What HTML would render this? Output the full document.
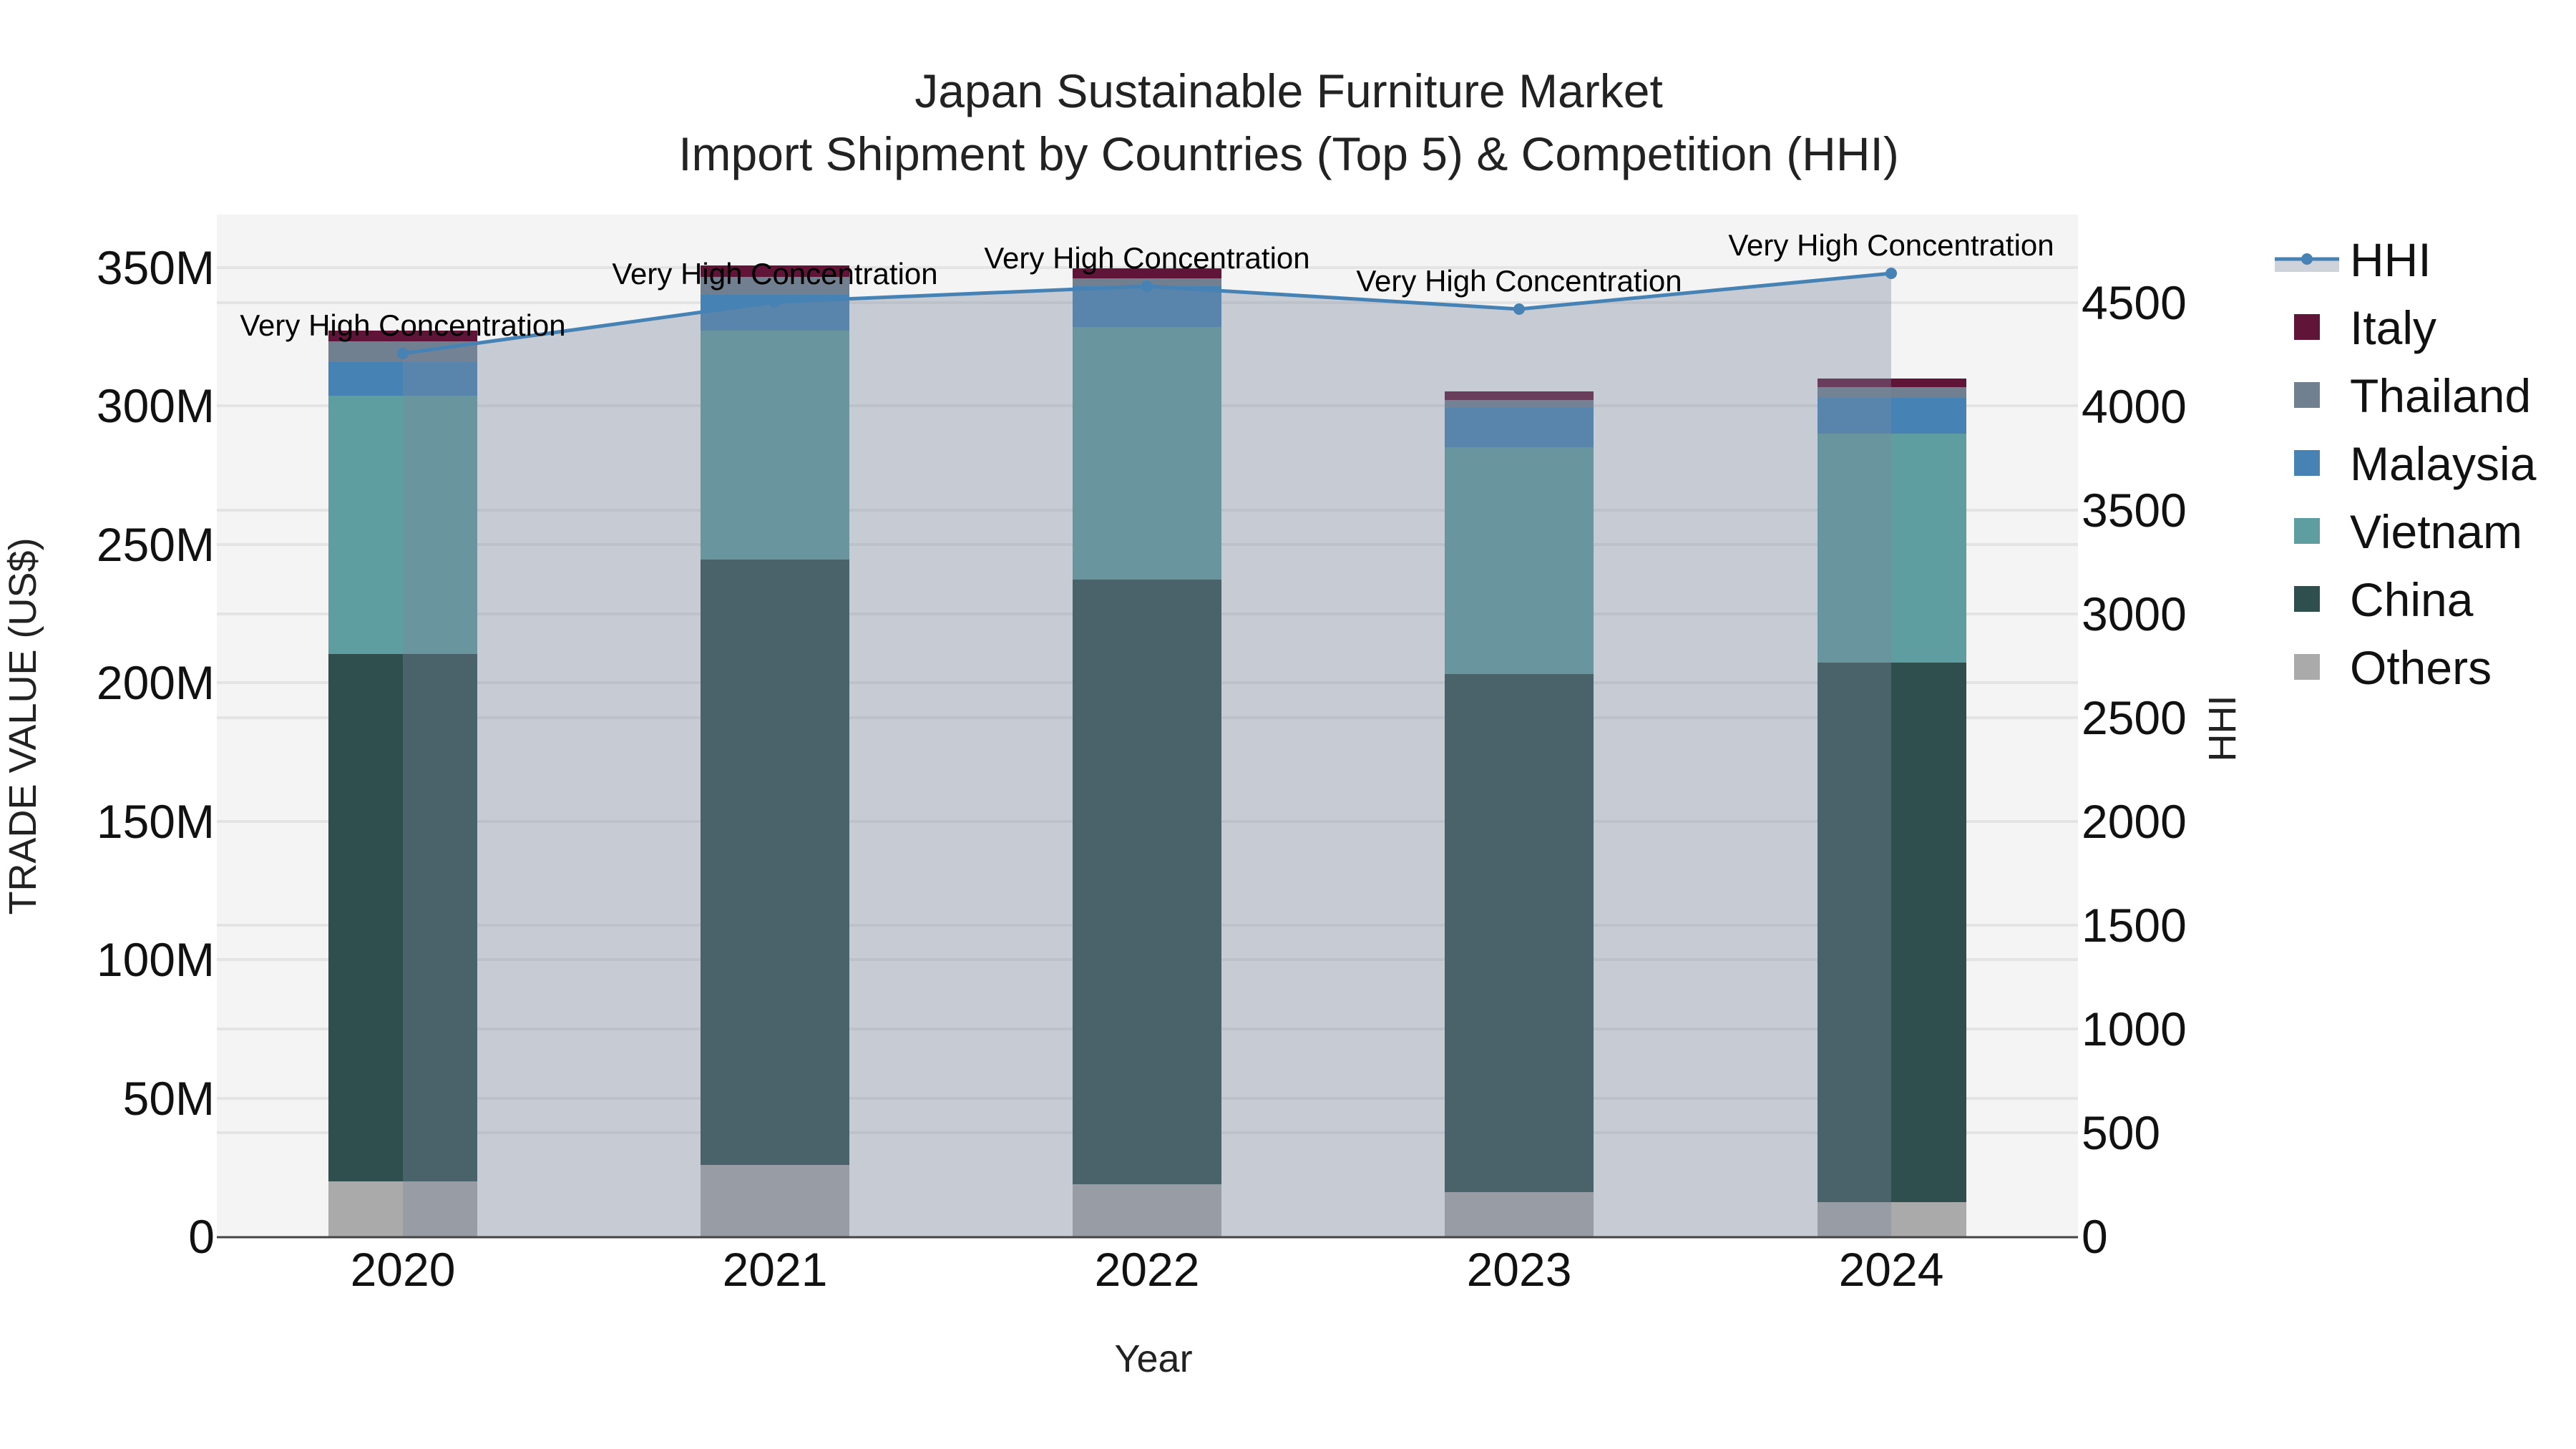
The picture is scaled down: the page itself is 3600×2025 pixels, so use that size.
<!DOCTYPE html>
<html><head><meta charset="utf-8"><style>html,body{margin:0;padding:0;background:#fff}svg{display:block}</style></head><body>
<svg width="3600" height="2025" xmlns="http://www.w3.org/2000/svg" font-family="'Liberation Sans', sans-serif">
<rect x="303" y="300" width="2601" height="1428" fill="#f4f4f4"/>
<g stroke="#e4e4e4" stroke-width="4">
<line x1="303" x2="2904" y1="1535" y2="1535"/><line x1="303" x2="2904" y1="1341" y2="1341"/><line x1="303" x2="2904" y1="1148" y2="1148"/><line x1="303" x2="2904" y1="954" y2="954"/><line x1="303" x2="2904" y1="761" y2="761"/><line x1="303" x2="2904" y1="567" y2="567"/><line x1="303" x2="2904" y1="374" y2="374"/>
<line x1="303" x2="2904" y1="1583" y2="1583"/><line x1="303" x2="2904" y1="1438" y2="1438"/><line x1="303" x2="2904" y1="1293" y2="1293"/><line x1="303" x2="2904" y1="1148" y2="1148"/><line x1="303" x2="2904" y1="1003" y2="1003"/><line x1="303" x2="2904" y1="858" y2="858"/><line x1="303" x2="2904" y1="713" y2="713"/><line x1="303" x2="2904" y1="423" y2="423"/>
</g>
<g>
<rect x="459" y="1651" width="208" height="77" fill="#aaaaaa"/><rect x="459" y="914" width="208" height="737" fill="#2f4f4f"/><rect x="459" y="553" width="208" height="361" fill="#5f9ea0"/><rect x="459" y="506" width="208" height="47" fill="#4682b4"/><rect x="459" y="477" width="208" height="29" fill="#708090"/><rect x="459" y="462" width="208" height="15" fill="#601437"/>
<rect x="979" y="1628" width="208" height="100" fill="#aaaaaa"/><rect x="979" y="782" width="208" height="846" fill="#2f4f4f"/><rect x="979" y="462" width="208" height="320" fill="#5f9ea0"/><rect x="979" y="412" width="208" height="50" fill="#4682b4"/><rect x="979" y="387" width="208" height="25" fill="#708090"/><rect x="979" y="371" width="208" height="16" fill="#601437"/>
<rect x="1499" y="1655" width="208" height="73" fill="#aaaaaa"/><rect x="1499" y="810" width="208" height="845" fill="#2f4f4f"/><rect x="1499" y="457" width="208" height="353" fill="#5f9ea0"/><rect x="1499" y="400" width="208" height="57" fill="#4682b4"/><rect x="1499" y="389" width="208" height="11" fill="#708090"/><rect x="1499" y="375" width="208" height="14" fill="#601437"/>
<rect x="2019" y="1666" width="208" height="62" fill="#aaaaaa"/><rect x="2019" y="942" width="208" height="724" fill="#2f4f4f"/><rect x="2019" y="625" width="208" height="317" fill="#5f9ea0"/><rect x="2019" y="570" width="208" height="55" fill="#4682b4"/><rect x="2019" y="559" width="208" height="11" fill="#708090"/><rect x="2019" y="547" width="208" height="12" fill="#601437"/>
<rect x="2540" y="1680" width="208" height="48" fill="#aaaaaa"/><rect x="2540" y="926" width="208" height="754" fill="#2f4f4f"/><rect x="2540" y="606" width="208" height="320" fill="#5f9ea0"/><rect x="2540" y="556" width="208" height="50" fill="#4682b4"/><rect x="2540" y="541" width="208" height="15" fill="#708090"/><rect x="2540" y="529" width="208" height="12" fill="#601437"/>
</g>
<polygon points="563,1728 563,494 1083,422 1603,400 2123,432 2643,382 2643,1728" fill="rgb(123,135,156)" fill-opacity="0.37"/>
<polyline points="563,494 1083,422 1603,400 2123,432 2643,382" fill="none" stroke="#4682b4" stroke-width="5"/>
<g fill="#4682b4"><circle cx="563" cy="494" r="8"/><circle cx="1083" cy="422" r="8"/><circle cx="1603" cy="400" r="8"/><circle cx="2123" cy="432" r="8"/><circle cx="2643" cy="382" r="8"/></g>
<line x1="303" x2="2904" y1="1729" y2="1729" stroke="#444" stroke-width="3"/>
<g font-size="42" fill="#000" text-anchor="middle">
<text x="563" y="469">Very High Concentration</text><text x="1083" y="397">Very High Concentration</text><text x="1603" y="375">Very High Concentration</text><text x="2123" y="407">Very High Concentration</text><text x="2643" y="357">Very High Concentration</text>
</g>
<g font-size="66" fill="#111" text-anchor="end">
<text x="300" y="1751">0</text><text x="300" y="1558">50M</text><text x="300" y="1364">100M</text><text x="300" y="1171">150M</text><text x="300" y="977">200M</text><text x="300" y="784">250M</text><text x="300" y="590">300M</text><text x="300" y="397">350M</text>
</g>
<g font-size="66" fill="#111">
<text x="2909" y="1751">0</text><text x="2909" y="1606">500</text><text x="2909" y="1461">1000</text><text x="2909" y="1316">1500</text><text x="2909" y="1171">2000</text><text x="2909" y="1026">2500</text><text x="2909" y="881">3000</text><text x="2909" y="736">3500</text><text x="2909" y="591">4000</text><text x="2909" y="446">4500</text>
</g>
<g font-size="66" fill="#111" text-anchor="middle">
<text x="563" y="1797">2020</text><text x="1083" y="1797">2021</text><text x="1603" y="1797">2022</text><text x="2123" y="1797">2023</text><text x="2643" y="1797">2024</text>
</g>
<text x="1612" y="1917" font-size="54" text-anchor="middle" fill="#222">Year</text>
<text transform="translate(50,1015) rotate(-90)" font-size="54" text-anchor="middle" fill="#222">TRADE VALUE (US$)</text>
<text transform="translate(3124,1018) rotate(-90)" font-size="54" text-anchor="middle" fill="#222">HHI</text>
<g font-size="66" fill="#222" text-anchor="middle">
<text x="1801" y="150">Japan Sustainable Furniture Market</text>
<text x="1801" y="238">Import Shipment by Countries (Top 5) &amp; Competition (HHI)</text>
</g>
<rect x="3179" y="362" width="90" height="18" fill="rgb(123,135,156)" fill-opacity="0.37"/>
<line x1="3179" x2="3269" y1="362" y2="362" stroke="#4682b4" stroke-width="5"/>
<circle cx="3224" cy="362" r="8" fill="#4682b4"/>
<rect x="3206" y="439" width="36" height="36" fill="#601437"/>
<rect x="3206" y="534" width="36" height="36" fill="#708090"/>
<rect x="3206" y="629" width="36" height="36" fill="#4682b4"/>
<rect x="3206" y="724" width="36" height="36" fill="#5f9ea0"/>
<rect x="3206" y="819" width="36" height="36" fill="#2f4f4f"/>
<rect x="3206" y="914" width="36" height="36" fill="#aaaaaa"/>
<g font-size="66" fill="#111">
<text x="3284" y="386">HHI</text><text x="3284" y="481">Italy</text><text x="3284" y="576">Thailand</text><text x="3284" y="671">Malaysia</text><text x="3284" y="766">Vietnam</text><text x="3284" y="861">China</text><text x="3284" y="956">Others</text>
</g>
</svg>
</body></html>
